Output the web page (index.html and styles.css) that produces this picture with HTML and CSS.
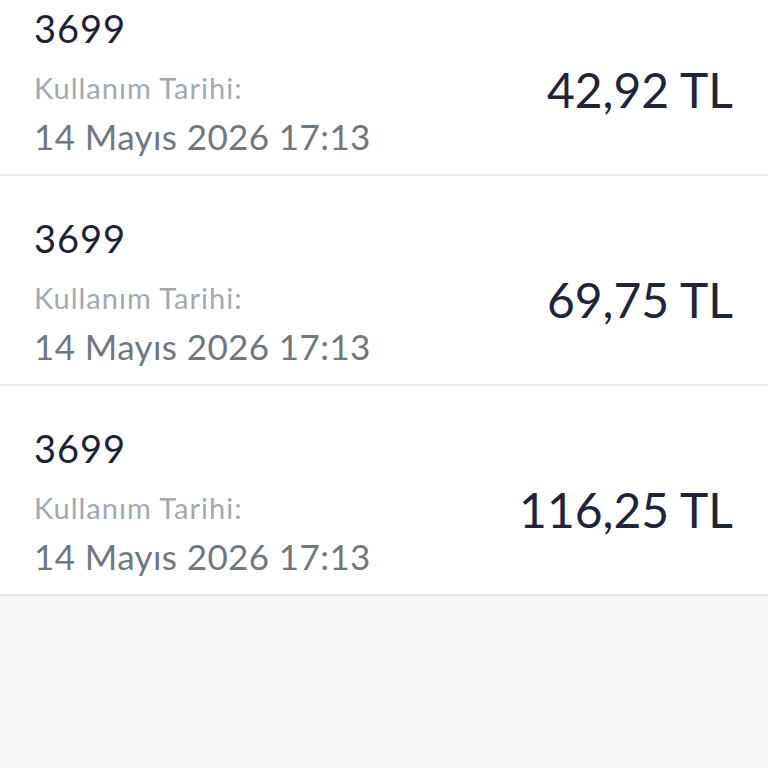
FILE: index.html
```html
<!DOCTYPE html>
<html lang="tr">
<head>
    <meta charset="UTF-8">
    <meta name="viewport" content="width=device-width, initial-scale=1.0">
    <title>Kullanım Geçmişi</title>
    <link rel="stylesheet" href="styles.css">
</head>
<body>

    <!-- Usage list (scrolled, first row partly above the fold) -->
    <ul class="usage-list">
        <li class="usage-item">
            <div class="usage-info">
                <div class="usage-code">3699</div>
                <div class="usage-label">Kullanım Tarihi:</div>
                <div class="usage-date">14 Mayıs 2026 17:13</div>
            </div>
            <div class="usage-amount">42,92 TL</div>
        </li>
        <li class="usage-item">
            <div class="usage-info">
                <div class="usage-code">3699</div>
                <div class="usage-label">Kullanım Tarihi:</div>
                <div class="usage-date">14 Mayıs 2026 17:13</div>
            </div>
            <div class="usage-amount">69,75 TL</div>
        </li>
        <li class="usage-item">
            <div class="usage-info">
                <div class="usage-code">3699</div>
                <div class="usage-label">Kullanım Tarihi:</div>
                <div class="usage-date">14 Mayıs 2026 17:13</div>
            </div>
            <div class="usage-amount">116,25 TL</div>
        </li>
    </ul>

</body>
</html>
```

FILE: styles.css
```css
body {
    font-family: Lato, "Open Sans", sans-serif;
    background-color: #f5f6f8;
    margin: 0;
    padding: 0;
}

.usage-list {
    list-style: none;
    margin: -34px 0 0 0;
    padding: 0;
    background: white;
}

.usage-item {
    display: flex;
    justify-content: space-between;
    align-items: flex-start;
    padding: 39px 35px 17px 34px;
    border-bottom: 2px solid #e6e7ea;
}

.usage-code {
    font-size: 38px;
    line-height: 46px;
    letter-spacing: 1px;
    color: #1e2235;
}

.usage-label {
    margin-top: 20px;
    font-size: 29px;
    line-height: 34px;
    letter-spacing: 1px;
    color: #a3a8b1;
}

.usage-date {
    margin-top: 10px;
    font-size: 35px;
    line-height: 42px;
    letter-spacing: 0.4px;
    color: #71777f;
}

.usage-amount {
    margin-top: 56px;
    font-size: 48px;
    line-height: 58px;
    color: #1f2438;
}
```
